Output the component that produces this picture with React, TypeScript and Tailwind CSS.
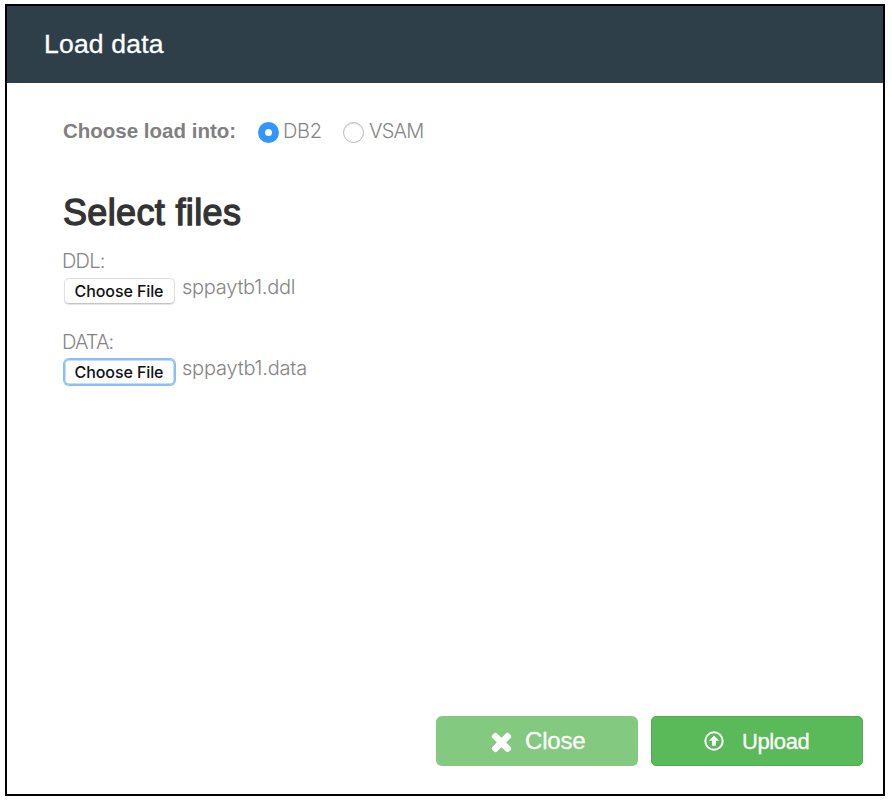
import type { ReactNode } from 'react';
import { FaTimes } from 'react-icons/fa';

function Radio({ checked, label, gap }: { checked?: boolean; label: ReactNode; gap: string }) {
  return (
    <label className={`flex items-center ${gap}`}>
      <span
        className={`mt-[2px] flex h-[21px] w-[21px] items-center justify-center rounded-full ${
          checked ? 'bg-[#3296fc]' : 'border border-[#b8b8b8] bg-white shadow-[inset_0_1px_1px_rgba(0,0,0,0.12)]'
        }`}
      >
        {checked && <span className="h-[7px] w-[7px] rounded-full bg-white" />}
      </span>
      {label}
    </label>
  );
}

function FileField({ label, file, focused }: { label: ReactNode; file: ReactNode; focused?: boolean }) {
  return (
    <div className="h-[81px]">
      <div className="-ml-px h-[29px] leading-[24px]">{label}</div>
      <div className="flex">
        <button
          className={`ml-px h-[26px] w-[111px] shrink-0 rounded-[5px] bg-white pr-px font-['Inter',sans-serif] text-[16px] font-medium tracking-[-0.1px] text-[#111] ${
            focused
              ? 'leading-[27px] shadow-[inset_0_0_0_1.5px_#8dbdf8,0_0_0_1px_#8dbdf8]'
              : 'border border-[#dedede] border-b-[#c4c4c4] leading-[25px] shadow-[0_1px_1px_rgba(0,0,0,0.12)]'
          }`}
        >
          Choose File
        </button>
        <span className="ml-[7px] leading-[19px]">{file}</span>
      </div>
    </div>
  );
}

export default function App() {
  return (
    <div className="h-[804px] w-[892px] bg-white pt-[4px] pl-[5px] font-['Liberation_Sans',Arial,sans-serif]">
      <div className="flex h-[792px] w-[880px] flex-col border-2 border-black bg-white">
        <header className="flex h-[77px] shrink-0 items-center bg-[#2e3f4a] pb-[2px] pl-[37px] text-white">
          <h1 className="text-[26.5px] leading-[32px] tracking-[0.2px] [-webkit-text-stroke:0.3px_white]">Load data</h1>
        </header>
        <main className="flex-1 pt-[33px] pl-[56px] font-['Inter',sans-serif] text-[20px] font-light text-[#858585]">
          <div className="flex h-[30px] items-center">
            <span className="w-[195px] font-['Liberation_Sans',Arial,sans-serif] text-[20.5px] font-bold text-[#808080]">
              Choose load into:
            </span>
            <Radio checked gap="gap-[4px]" label={<span className="w-[60px] tracking-[-0.3px]">DB2</span>} />
            <Radio gap="gap-[5px]" label={<span className="tracking-[-0.8px]">VSAM</span>} />
          </div>
          <h2 className="mt-[45px] h-[58px] font-['Liberation_Sans',Arial,sans-serif] text-[36px] leading-[44px] font-normal tracking-[0.35px] text-[#333] [-webkit-text-stroke:1.3px_#333]">
            Select files
          </h2>
          <FileField
            label={<span className="tracking-[-0.8px]">DDL:</span>}
            file={<span className="tracking-[-0.25px]">sppaytb1.ddl</span>}
          />
          <FileField
            label={<span className="tracking-[-0.9px]">DATA:</span>}
            file={<span className="tracking-[-0.2px]">sppaytb1.data</span>}
            focused
          />
        </main>
        <footer className="flex justify-end gap-[13px] pr-[20px] pb-[28px] text-white">
          <button className="flex h-[50px] w-[202px] items-center rounded-[6px] bg-[#83c980] pl-[55px] text-[24px] tracking-[-0.2px] [-webkit-text-stroke:0.3px_white]">
            <FaTimes className="mt-[2px] mr-[13px] h-[25px] w-[21px]" stroke="white" strokeWidth="42" />
            Close
          </button>
          <button className="flex h-[50px] w-[212px] items-center rounded-[5px] border border-[#4cae4c] bg-[#5ab958] pl-[52px] text-[22px] tracking-[-0.4px] [-webkit-text-stroke:0.3px_white]">
            <svg viewBox="0 0 20 20" className="mr-[18px] h-[20px] w-[20px]">
              <circle cx="10" cy="10" r="8.7" fill="none" stroke="white" strokeWidth="2" />
              <path d="M10 4.4 15 9.8H12V14.8H8V9.8H5Z" fill="white" />
            </svg>
            Upload
          </button>
        </footer>
      </div>
    </div>
  );
}
